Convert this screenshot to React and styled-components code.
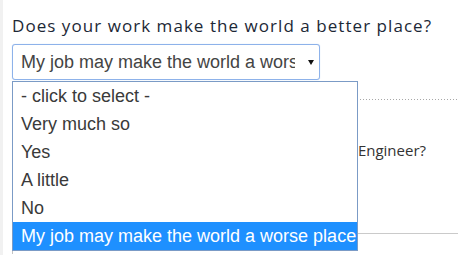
import React from 'react'
import styled, { createGlobalStyle } from 'styled-components'

const options = [
  '- click to select -',
  'Very much so',
  'Yes',
  'A little',
  'No',
  'My job may make the world a worse place',
]

const selected = options.length - 1

const App = () => {
  return (
    <>
      <GlobalStyle />
      <Page>
        <Question>Does your work make the world a better place?</Question>
        <SelectWrap>
          <Select>
            <SelectValue>{options[selected]}</SelectValue>
            <Arrow />
          </Select>
          <OptionList>
            {options.map((opt, i) => (
              <Option key={opt} $active={i === selected}>
                {opt}
              </Option>
            ))}
          </OptionList>
        </SelectWrap>

        {/* page content hidden behind the open list */}
        <Divider />
        <NextQuestion>Would you call yourself a Software Engineer?</NextQuestion>
        <AnswerBox />
      </Page>
    </>
  )
}

const GlobalStyle = createGlobalStyle`
  body {
    margin: 0;
    background: #fff;
    overflow: hidden;
  }
`

const Page = styled.main`
  box-sizing: border-box;
  height: 255px;
  overflow: hidden;
  border-left: 3px solid #f1f1f1;
  padding: 14px 0 0 9px;
  font-family: "Open Sans", "Liberation Sans", sans-serif;
`

const Question = styled.h2`
  margin: 0;
  font-size: 17px;
  line-height: 24px;
  font-weight: 400;
  letter-spacing: 1.05px;
  color: #1c2836;
`

const SelectWrap = styled.div`
  position: relative;
  width: 308px;
  margin-top: 6px;
`

const Select = styled.div`
  box-sizing: border-box;
  height: 36px;
  display: flex;
  align-items: center;
  padding: 0 0 0 8px;
  border: 1px solid #8db2ea;
  border-radius: 3px;
  box-shadow: 0 0 1px #b9d0f2;
  background: #fff;
`

const SelectValue = styled.span`
  width: 274px;
  overflow: hidden;
  white-space: nowrap;
  font-family: "Liberation Sans", Arial, sans-serif;
  font-size: 18px;
  color: #444;
`

const Arrow = styled.span`
  margin-left: 13px;
  width: 0;
  height: 0;
  border-left: 3px solid transparent;
  border-right: 3px solid transparent;
  border-top: 5px solid #111;
`

const OptionList = styled.ul`
  position: absolute;
  top: calc(100% + 1px);
  left: 0;
  z-index: 2;
  box-sizing: border-box;
  width: 346px;
  margin: 0;
  padding: 0;
  list-style: none;
  border: 1px solid #7b9bc6;
  background: #fff;
`

const Option = styled.li`
  height: 28px;
  line-height: 28px;
  padding-left: 8px;
  white-space: nowrap;
  font-family: "Liberation Sans", Arial, sans-serif;
  font-size: 18px;
  color: ${(p) => (p.$active ? '#fff' : '#3a3a3a')};
  background: ${(p) => (p.$active ? '#1e90ff' : 'transparent')};
`

const Divider = styled.div`
  height: 1px;
  margin-top: 19px;
  background: repeating-linear-gradient(to right, #a8a8a8 0 1px, transparent 1px 3px);
`

const NextQuestion = styled.p`
  width: 414px;
  margin: 40px 0 0;
  text-align: right;
  font-size: 15px;
  line-height: 20px;
  color: #333;
`

const AnswerBox = styled.div`
  height: 20px;
  margin-top: 73px;
  border-top: 1px solid #cacaca;
  border-left: 1px solid #c4c4c4;
`

export default App
